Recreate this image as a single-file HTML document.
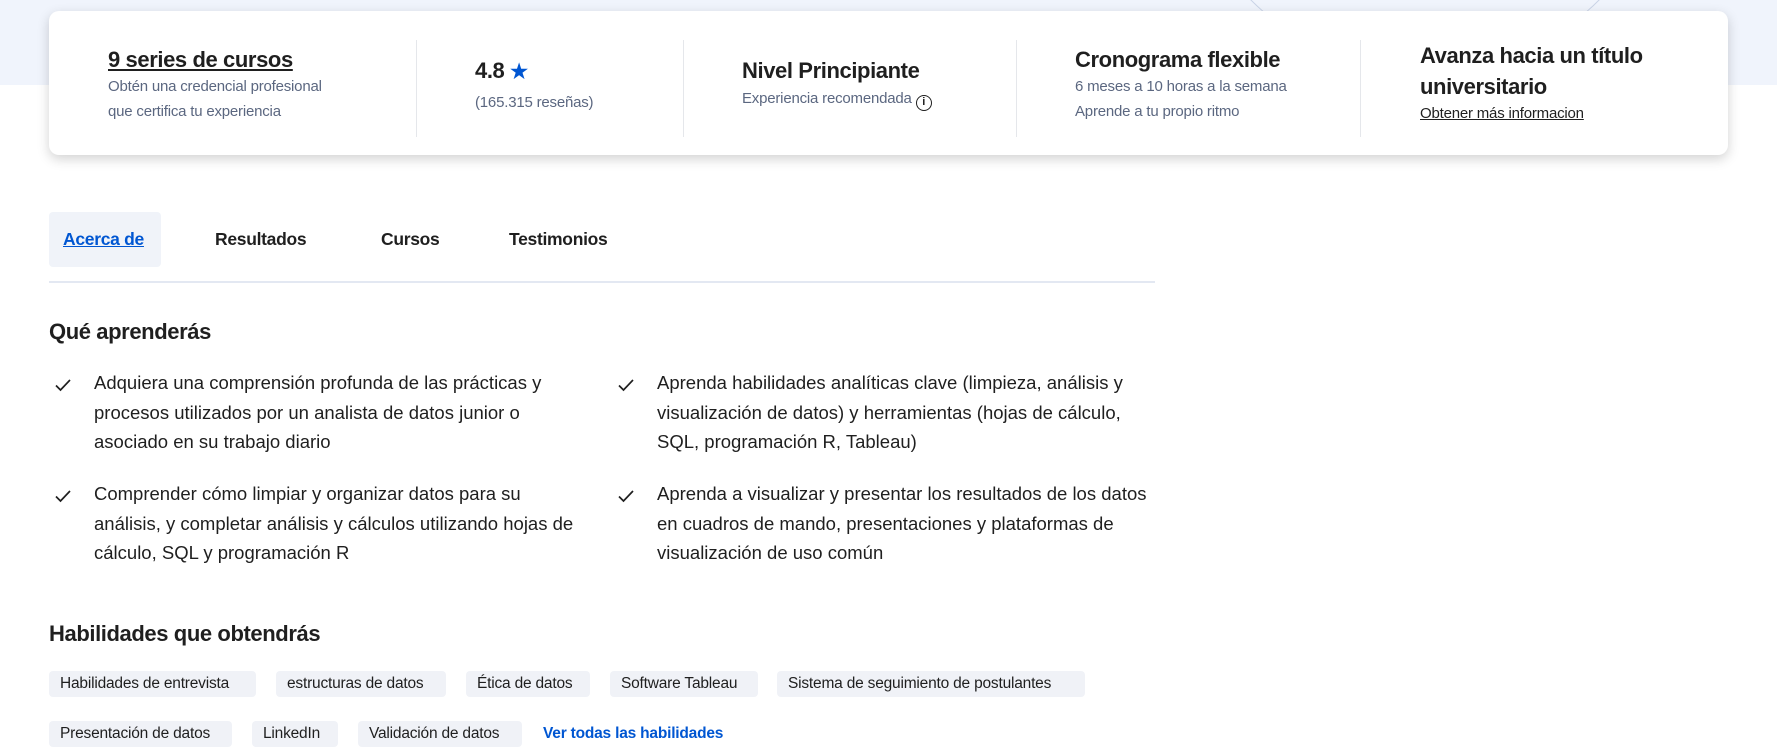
<!DOCTYPE html>
<html><head><meta charset="utf-8"><style>
*{margin:0;padding:0;box-sizing:border-box}
body{width:1777px;height:747px;overflow:hidden;background:#fff;font-family:"Liberation Sans",sans-serif;color:#1f1f1f;position:relative}
.topbg{position:absolute;left:0;top:0;width:1777px;height:85px;background:#f0f4fc;overflow:hidden}
.circ{position:absolute;border-radius:50%;border:1px solid #c9d3e6}
.card{position:absolute;left:49px;top:11px;width:1679px;height:144px;background:#fff;border-radius:10px;box-shadow:0 4px 12px rgba(0,0,0,.18)}
.col{position:absolute;top:0}
.div{position:absolute;top:29px;width:1px;height:97px;background:#e5e7eb}
.t{font-size:22px;font-weight:bold;letter-spacing:-0.4px;color:#1f1f1f}
.s{font-size:15px;color:#5b6780;line-height:25px;letter-spacing:-0.2px}
.tab{position:absolute;top:229px;font-size:17.5px;font-weight:bold;letter-spacing:-0.3px}
h2{position:absolute;font-size:22px;font-weight:bold;letter-spacing:-0.4px}
.item{position:absolute;font-size:18.5px;line-height:29.5px;letter-spacing:0px;width:462px}
.chk{position:absolute;width:18px;height:18px}
.chip{position:absolute;height:26px;background:#f0f2f7;border-radius:4px;font-size:15.5px;line-height:26px;padding-left:11px;color:#1f1f1f;letter-spacing:-0.2px;white-space:nowrap}
</style></head><body>
<div class="topbg"><div class="circ" style="left:1195px;top:-330px;width:460px;height:400px"></div><div class="circ" style="left:1320px;top:-110px;width:150px;height:110px;background:#e4e8f0"></div></div>
<div class="card">
 <div class="col" style="left:59px;top:36px"><div class="t" style="text-decoration:underline;line-height:26px">9 series de cursos</div><div class="s" style="margin-top:1px">Obtén una credencial profesional<br>que certifica tu experiencia</div></div>
 <div class="div" style="left:367px"></div>
 <div class="col" style="left:426px;top:47px"><div class="t" style="line-height:26px">4.8 <span style="color:#0056d2;font-size:20px">★</span></div><div class="s" style="margin-top:5px">(165.315 reseñas)</div></div>
 <div class="div" style="left:634px"></div>
 <div class="col" style="left:693px;top:47px"><div class="t" style="line-height:26px">Nivel Principiante</div><div class="s" style="margin-top:2px">Experiencia recomendada <span style="display:inline-block;width:16px;height:16px;border:1.5px solid #1f1f1f;border-radius:50%;font-size:11px;line-height:13px;text-align:center;color:#1f1f1f;font-weight:bold;vertical-align:-2px">i</span></div></div>
 <div class="div" style="left:967px"></div>
 <div class="col" style="left:1026px;top:36px"><div class="t" style="line-height:26px">Cronograma flexible</div><div class="s" style="margin-top:1px">6 meses a 10 horas a la semana<br>Aprende a tu propio ritmo</div></div>
 <div class="div" style="left:1311px"></div>
 <div class="col" style="left:1371px;top:29px"><div class="t" style="line-height:31px">Avanza hacia un título<br>universitario</div><div class="s" style="color:#1f1f1f;text-decoration:underline;line-height:23px">Obtener más informacion</div></div>
</div>
<div style="position:absolute;left:49px;top:212px;width:112px;height:55px;background:#f0f3f9;border-radius:4px"></div>
<div class="tab" style="left:63px;color:#0056d2;text-decoration:underline">Acerca de</div>
<div class="tab" style="left:215px">Resultados</div>
<div class="tab" style="left:381px">Cursos</div>
<div class="tab" style="left:509px">Testimonios</div>
<div style="position:absolute;left:49px;top:281px;width:1106px;height:2px;background:#e3e8f2"></div>
<h2 style="left:49px;top:319px">Qué aprenderás</h2>
<svg class="chk" style="left:54px;top:376px" viewBox="0 0 18 18"><path d="M2 9.5l4.5 4.5L16 4" fill="none" stroke="#1f1f1f" stroke-width="1.7"/></svg>
<div class="item" style="left:94px;top:368px">Adquiera una comprensión profunda de las prácticas y procesos utilizados por un analista de datos junior o asociado en su trabajo diario</div>
<svg class="chk" style="left:617px;top:376px" viewBox="0 0 18 18"><path d="M2 9.5l4.5 4.5L16 4" fill="none" stroke="#1f1f1f" stroke-width="1.7"/></svg>
<div class="item" style="left:657px;top:368px;width:485px">Aprenda habilidades analíticas clave (limpieza, análisis y visualización de datos) y herramientas (hojas de cálculo, SQL, programación R, Tableau)</div>
<svg class="chk" style="left:54px;top:487px" viewBox="0 0 18 18"><path d="M2 9.5l4.5 4.5L16 4" fill="none" stroke="#1f1f1f" stroke-width="1.7"/></svg>
<div class="item" style="left:94px;top:479px;width:485px">Comprender cómo limpiar y organizar datos para su análisis, y completar análisis y cálculos utilizando hojas de cálculo, SQL y programación R</div>
<svg class="chk" style="left:617px;top:487px" viewBox="0 0 18 18"><path d="M2 9.5l4.5 4.5L16 4" fill="none" stroke="#1f1f1f" stroke-width="1.7"/></svg>
<div class="item" style="left:657px;top:479px;width:500px">Aprenda a visualizar y presentar los resultados de los datos en cuadros de mando, presentaciones y plataformas de visualización de uso común</div>
<h2 style="left:49px;top:621px">Habilidades que obtendrás</h2>
<div class="chip" style="left:49px;top:671px;width:207px">Habilidades de entrevista</div>
<div class="chip" style="left:276px;top:671px;width:170px">estructuras de datos</div>
<div class="chip" style="left:466px;top:671px;width:124px">Ética de datos</div>
<div class="chip" style="left:610px;top:671px;width:148px">Software Tableau</div>
<div class="chip" style="left:777px;top:671px;width:308px">Sistema de seguimiento de postulantes</div>
<div class="chip" style="left:49px;top:721px;width:183px">Presentación de datos</div>
<div class="chip" style="left:252px;top:721px;width:86px">LinkedIn</div>
<div class="chip" style="left:358px;top:721px;width:164px">Validación de datos</div>
<div style="position:absolute;left:543px;top:725px;font-size:15.5px;font-weight:bold;color:#0056d2;letter-spacing:-0.2px">Ver todas las habilidades</div>
</body></html>
